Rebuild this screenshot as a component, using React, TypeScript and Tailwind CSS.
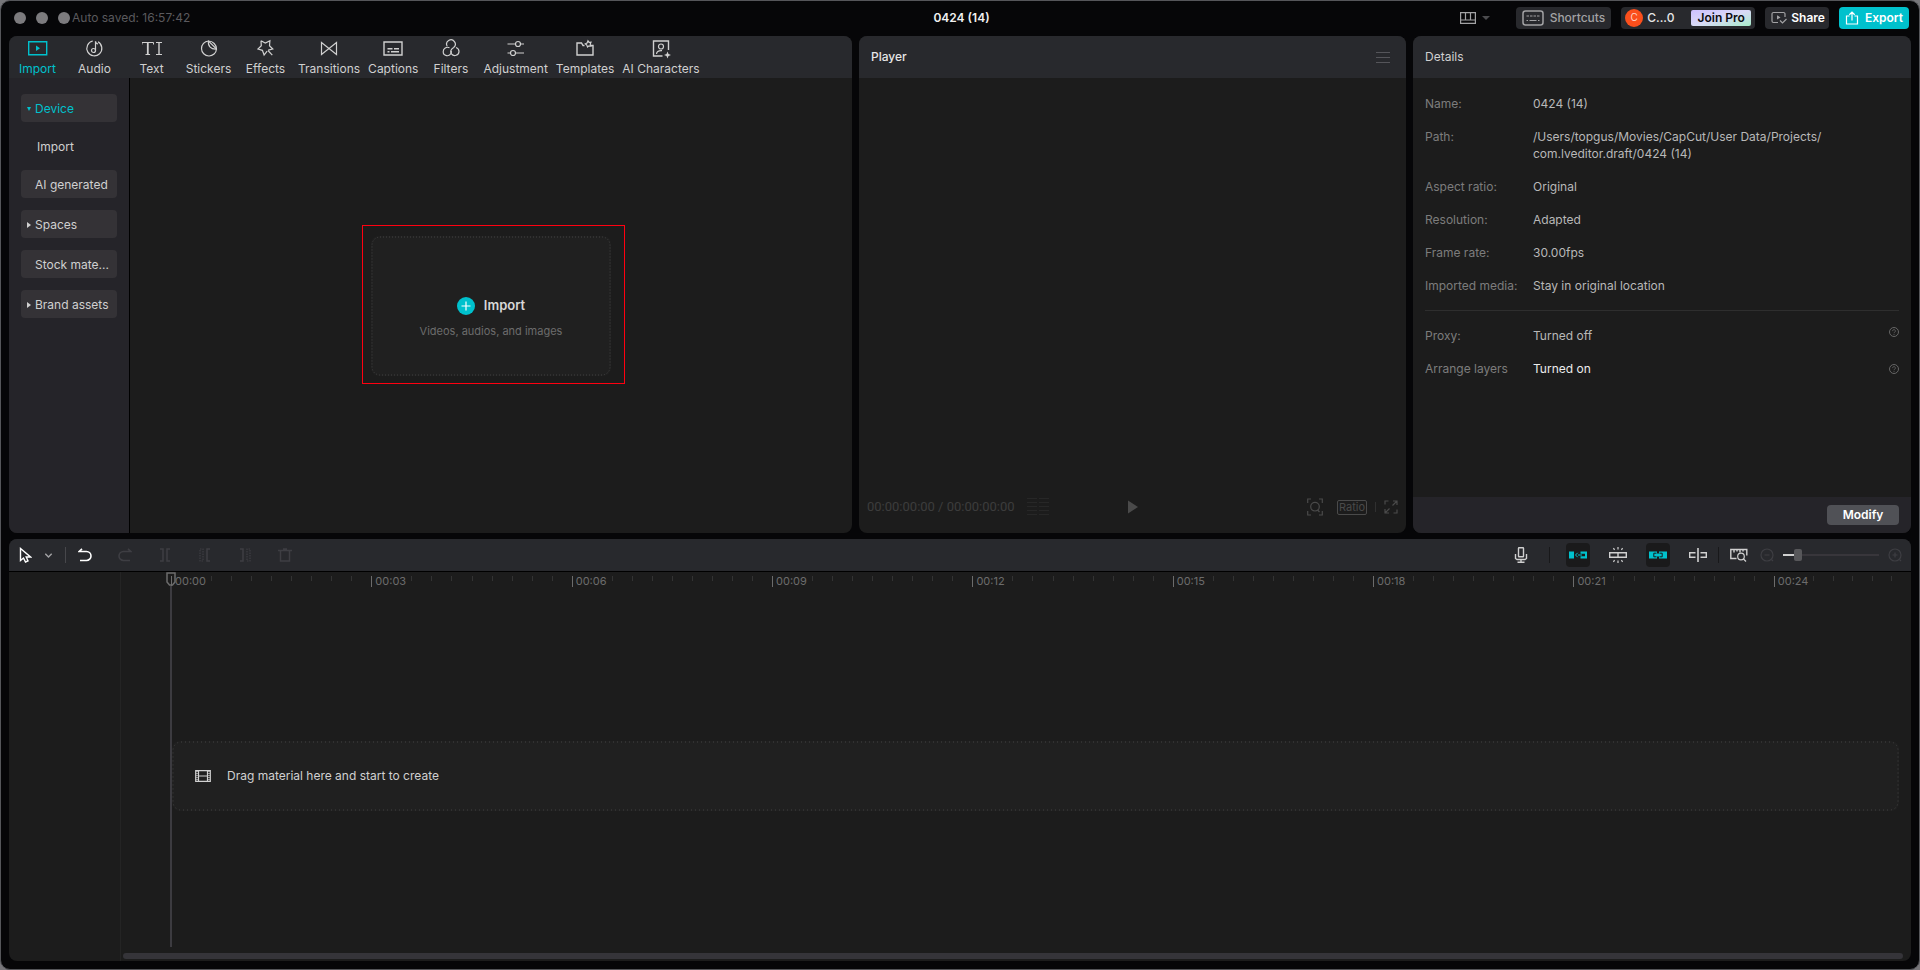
import React, { useState } from 'react';

const tabs = [
  'Import',
  'Audio',
  'Text',
  'Stickers',
  'Effects',
  'Transitions',
  'Captions',
  'Filters',
  'Adjustment',
  'Templates',
  'AI Characters',
];

const tabIcons: Record<string, React.ReactNode> = {
  Import: (
    <>
      <path d="M.7 2.700h18v13H.7z" strokeWidth="1.4" />
      <path d="M8 6.500v5.400l4-2.700z" fill="currentColor" stroke="none" />
    </>
  ),
  Audio: (
    <>
      <path d="M7.800 2A7.500 7.500 0 1 0 13 2.800" />
      <circle cx="8.500" cy="11.500" r="2" />
      <path d="M10.500 11.500V2.200c.2 1.800 1 2.600 2.600 2.800" />
    </>
  ),
  Text: (
    <>
      <path d="M0 5.500V3.500h11.500v2M3.500 15.500h4.600" strokeWidth="1" />
      <path d="M5.800 3.500v12" strokeWidth="1.800" />
      <path d="M14 3.500h6M14 15.500h6" strokeWidth="1" />
      <path d="M17 3.500v12" strokeWidth="1.400" />
    </>
  ),
  Stickers: (
    <>
      <path d="M9.500 2A7.500 7.500 0 1 0 17.500 10z" />
      <path d="M9.500 2c-.8 5 2.500 8.500 8 8C17.500 6 14 2 9.500 2z" />
    </>
  ),
  Effects: (
    <>
      <path d="M5 1.800l4.300 2.300 4.600-2.300-.4 4.900 3.300 3.300-4.600 1.200M5 1.800l.3 5L2 10l4.400 1.300L8.100 16l3-3.800" />
      <path d="M12 11.500l4.300 4.600" />
    </>
  ),
  Transitions: <path d="M2.500 3.500v12l15-12v12z" />,
  Captions: (
    <>
      <path d="M1 3h18v13H1z" strokeWidth="1.4" />
      <path d="M4.500 9.700h5M11 9.700h5M4.500 12.700h2M8 12.700h8" strokeWidth="1.6" />
    </>
  ),
  Filters: (
    <>
      <path d="M6.200 7.300a4.300 4.300 0 1 1 6.500 1.200c-3 1.600-3.600 4-2.200 6.300 2.400 3.300 7.500 1.400 7.500-2.300 0-2-1.200-3.400-3-4" />
      <path d="M8.500 8.700c-3-1.300-6.300.7-6.300 4 0 4.200 6 5.500 7.700 1.900.4-.8.500-1.700.3-2.600" />
    </>
  ),
  Adjustment: (
    <>
      <path d="M1.500 5h8M14.500 5H18M1.500 14h3M9.500 14H18" />
      <circle cx="12" cy="5" r="2.500" />
      <circle cx="7" cy="14" r="2.500" />
    </>
  ),
  Templates: (
    <>
      <path d="M9.500 6.500H8L6.500 4H2v12h16V6.500h-2" strokeWidth="1.4" />
      <path d="M13 1.800l1 1.500 2-.1-.8 1.900.7 2-1.900-.3-1.500 1.200-.7-2-1.500-1.200 1.800-.8z" />
    </>
  ),
  'AI Characters': (
    <>
      <path d="M17.500 11V2h-15v15h9" strokeWidth="1.4" />
      <circle cx="10" cy="7.500" r="2.500" />
      <path d="M5.500 15c.2-2.500 2-3.500 5.500-3.300" />
      <path d="M16.500 12.500l1 2.500 2.500 1-2.500 1-1 2.500-1-2.500-2.500-1 2.500-1z" fill="currentColor" stroke="none" />
    </>
  ),
};

const sidebar = [
  { label: 'AI generated', arrow: false },
  { label: 'Spaces', arrow: true },
  { label: 'Stock mate...', arrow: false },
  { label: 'Brand assets', arrow: true },
];

const details = [
  { label: 'Name:', value: '0424 (14)' },
  { label: 'Path:', value: '/Users/topgus/Movies/CapCut/User Data/Projects/\ncom.lveditor.draft/0424 (14)' },
  { label: 'Aspect ratio:', value: 'Original' },
  { label: 'Resolution:', value: 'Adapted' },
  { label: 'Frame rate:', value: '30.00fps' },
  { label: 'Imported media:', value: 'Stay in original location' },
];

const times = ['00:00', '00:03', '00:06', '00:09', '00:12', '00:15', '00:18', '00:21', '00:24'];

type IconProps = { w: number; h: number; className?: string; children: React.ReactNode };

function Icon({ w, h, className, children }: IconProps) {
  return (
    <svg
      width={w}
      height={h}
      viewBox={`0 0 ${w} ${h}`}
      fill="none"
      stroke="currentColor"
      strokeWidth="1.2"
      className={`shrink-0 ${className ?? ''}`}
      aria-hidden="true"
    >
      {children}
    </svg>
  );
}

// widely spaced dots round a drop area
function DottedEdge({ dash }: { dash: string }) {
  return (
    <svg className="pointer-events-none absolute inset-0 size-full overflow-visible p-px" aria-hidden="true">
      <rect width="100%" height="100%" rx="8" fill="none" stroke="#434343" strokeDasharray={dash} />
    </svg>
  );
}

function TitleBar() {
  return (
    <header className="grid h-[35px] shrink-0 grid-cols-[1fr_auto_1fr] items-center pr-2.5 pb-0.5 pl-[13px]">
      <div className="flex items-center">
        <div className="flex gap-[10px]">
          <span className="size-3 rounded-full bg-[#7c7b7e]" />
          <span className="size-3 rounded-full bg-[#7c7b7e]" />
          <span className="size-3 rounded-full bg-[#7c7b7e]" />
        </div>
        <span className="ml-0.5 text-[#5a595d]">Auto saved: 16:57:42</span>
      </div>
      <h1 className="font-semibold text-[#f0f0f0]">0424 (14)</h1>
      <div className="flex items-center justify-end gap-[10px]">
        <button type="button" aria-label="Layout" className="mr-4 flex items-center gap-1.5 text-[#a2a2a4]">
          <Icon w={16} h={12}>
            <path d="M.6.6h14.800v10.800H.6zM.6 8h14.800M5.500.6V8M10.500.6V8" />
          </Icon>
          <Icon w={8} h={4} className="text-[#4b4b4e]">
            <path d="M0 0h8L4 4z" fill="currentColor" stroke="none" />
          </Icon>
        </button>
        <button type="button" className="flex h-[22px] items-center gap-1.5 rounded bg-[#28292d] px-1.5 font-medium text-[#a2a2a4]">
          <Icon w={22} h={16}>
            <rect x="1" y="1" width="20" height="14" rx="2.5" strokeWidth="1.5" />
            <path d="M4.500 6h2.500M8 6h2.500M11.500 6H14M15 6h2.500M4.500 10.500H6M7.500 10.500h7M16 10.500h1.500" />
          </Icon>
          Shortcuts
        </button>
        <div className="flex h-[22px] items-center rounded bg-[#28292d] px-1">
          <span className="flex size-[18px] items-center justify-center rounded-full bg-[#fb4f1c] text-[10px] text-[#ffd5c8]">C</span>
          <span className="ml-1 w-11 font-medium text-[#e6e6e6]">C...0</span>
          <button
            type="button"
            className="h-4 w-[60px] rounded-xs bg-linear-to-br from-[#cdbfff] via-[#d9d9f6] to-[#a5ecc9] leading-4 font-semibold text-[#0b0b10]"
          >
            Join Pro
          </button>
        </div>
        <button type="button" className="flex h-[22px] items-center gap-1 rounded bg-[#28292d] pr-1 pl-1.5 font-semibold text-white">
          <Icon w={16} h={14} className="text-[#a2a2a4]">
            <path d="M14 6V3a1.500 1.500 0 0 0-1.500-1.500h-10A1.500 1.500 0 0 0 1 3v7a1.500 1.500 0 0 0 1.500 1.500H7" />
            <path d="M6 4.200v4.300l3.500-2.100z" fill="currentColor" stroke="none" />
            <path d="M9 9.500l2.500 2.500L15.500 8" />
          </Icon>
          Share
        </button>
        <button type="button" className="flex h-[22px] items-center gap-1.5 rounded bg-[#00c1cd] px-1.5 font-semibold text-white">
          <Icon w={14} h={14}>
            <path d="M4.500 5H1.500v8h11V5h-3M7 9.500V1.500M4.300 3.800L7 1.200l2.700 2.600" />
          </Icon>
          Export
        </button>
      </div>
    </header>
  );
}

function MediaPanel() {
  const [active, setActive] = useState('Import');

  return (
    <section className="flex min-w-0 flex-col overflow-hidden rounded-lg bg-[#1c1c1c]">
      <nav className="flex h-[42px] shrink-0 bg-[#28292d]">
        {tabs.map((tab) => (
          <button
            key={tab}
            type="button"
            onClick={() => setActive(tab)}
            className={`flex min-w-[57px] flex-col items-center gap-0.5 px-1 pt-[3px] ${
              active === tab ? 'text-[#00c1cd]' : 'text-[#d0d0d0]'
            }`}
          >
            <Icon w={20} h={20}>
              {tabIcons[tab]}
            </Icon>
            <span className="leading-4 whitespace-nowrap">{tab}</span>
          </button>
        ))}
      </nav>
      <div className="flex flex-1">
        <aside className="flex w-[121px] shrink-0 flex-col border-r border-black bg-[#252429] px-3 pt-4 text-[#d0d0d0]">
          <button type="button" className="flex h-7 items-center gap-1 rounded bg-[#343236] pt-0.5 pl-1.5 text-[#00c1cd]">
            <Icon w={4} h={4}>
              <path d="M0 0h4L2 4z" fill="currentColor" stroke="none" />
            </Icon>
            Device
          </button>
          <button type="button" className="h-12 pt-0.5 pl-4 text-left">
            Import
          </button>
          <div className="flex flex-col gap-3">
            {sidebar.map((item) => (
              <button
                key={item.label}
                type="button"
                className="flex h-7 items-center gap-1 rounded bg-[#343236] pt-0.5 pl-1.5 whitespace-nowrap"
              >
                <Icon w={4} h={6}>
                  {item.arrow && <path d="M0 0v6l4-3z" fill="currentColor" stroke="none" />}
                </Icon>
                {item.label}
              </button>
            ))}
          </div>
        </aside>
        <div className="flex flex-1 items-center justify-center">
          <div className="relative">
            <button
              type="button"
              className="relative flex h-[140px] w-60 flex-col items-center justify-center rounded-lg bg-[#202020] pt-6"
            >
              <DottedEdge dash="1 2" />
              <span className="flex items-center gap-[9px] text-[13px] font-semibold text-[#d8d8d8]">
                <span className="flex size-[18px] items-center justify-center rounded-full bg-[#00c1cd] text-white">
                  <Icon w={10} h={10}>
                    <path d="M5 .5v9M.5 5h9" />
                  </Icon>
                </span>
                Import
              </span>
              <span className="mt-[9px] text-[11px] text-[#6c6c6c]">Videos, audios, and images</span>
            </button>
            <span className="pointer-events-none absolute -top-[11px] -left-[9px] h-[159px] w-[263px] border border-[#ff0010]" />
          </div>
        </div>
      </div>
    </section>
  );
}

function PlayerPanel() {
  return (
    <section className="flex min-w-0 flex-col overflow-hidden rounded-lg bg-[#1c1c1c]">
      <div className="flex h-[42px] shrink-0 items-center justify-between bg-[#28292d] pr-4 pl-3">
        <h2 className="font-medium text-[#e6e6e6]">Player</h2>
        <button type="button" aria-label="Player menu" className="text-[#55555a]">
          <Icon w={14} h={11}>
            <path d="M0 .5h14M0 5.500h14M0 10.500h14" strokeWidth="1" />
          </Icon>
        </button>
      </div>
      <div className="flex-1" />
      <div className="grid h-[52px] grid-cols-[1fr_auto_1fr] items-center px-2 text-[#3c3c3c]">
        <div className="flex items-center gap-3">
          <span className="font-['Roboto','Liberation_Sans',sans-serif] text-[13px]">00:00:00:00 / 00:00:00:00</span>
          <Icon w={22} h={17} className="text-[#272727]">
            <path d="M0 .5h10M12 .5h10M0 4.500h10M12 4.500h10M0 8.500h10M12 8.500h10M0 12.500h10M12 12.500h10M0 16.500h10M12 16.500h10" strokeWidth="1" />
          </Icon>
        </div>
        <button type="button" aria-label="Play" className="text-[#4a4a4a]">
          <Icon w={10} h={14}>
            <path d="M0 .5v13L10 7z" fill="currentColor" stroke="none" />
          </Icon>
        </button>
        <div className="flex items-center justify-end text-[#4a4a4a]">
          <button type="button" aria-label="Zoom preview">
            <Icon w={16} h={18}>
              <path d="M.7 5V1H4M12 1h3.300v4M.7 13v4H4M12 17h3.300v-4" />
              <circle cx="8" cy="8.700" r="4.3" />
              <path d="M10.500 12l2 2" />
            </Icon>
          </button>
          <button type="button" className="ml-[14px] rounded-xs border border-[#4a4a4a] px-px text-[11px] leading-[13px]">
            Ratio
          </button>
          <span className="mx-2 h-2.5 w-px bg-[#303030]" />
          <button type="button" aria-label="Full screen">
            <Icon w={14} h={14}>
              <path d="M1 4.500V1h3.500M9 1h4v4M13 1L8.500 5.500M1 9v4h4M1 13l4.500-4.500M13 9.500V13H9.500" />
            </Icon>
          </button>
        </div>
      </div>
    </section>
  );
}

function HelpButton({ label }: { label: string }) {
  return (
    <button type="button" aria-label={label} className="text-[#666666]">
      <Icon w={10} h={10}>
        <circle cx="5" cy="5" r="4.5" strokeWidth="1" />
        <path d="M3.600 4.100a1.400 1.400 0 1 1 1.900 1.200c-.4.200-.5.400-.5.900M5 7v.9" strokeWidth=".8" />
      </Icon>
    </button>
  );
}

function DetailsPanel() {
  return (
    <section className="flex min-w-0 flex-col overflow-hidden rounded-lg bg-[#1c1c1c]">
      <h2 className="flex h-[42px] shrink-0 items-center bg-[#28292d] px-3 text-[#d0d0d0]">Details</h2>
      <div className="flex-1 px-3 pt-[17px] leading-[17px]">
        <dl className="flex flex-col gap-4 border-b border-[#2e2e2e] pb-4">
          {details.map((row) => (
            <div key={row.label} className="flex">
              <dt className="w-[108px] shrink-0 text-[#7c7c7c]">{row.label}</dt>
              <dd className="whitespace-pre-line text-[#b8b8b8]">{row.value}</dd>
            </div>
          ))}
        </dl>
        <dl className="flex flex-col gap-4 pt-4">
          <div className="flex">
            <dt className="w-[108px] shrink-0 text-[#7c7c7c]">Proxy:</dt>
            <dd className="flex flex-1 justify-between text-[#b8b8b8]">
              Turned off
              <span className="flex items-start">
                <HelpButton label="About proxy" />
              </span>
            </dd>
          </div>
          <div className="flex">
            <dt className="w-[108px] shrink-0 text-[#7c7c7c]">Arrange layers</dt>
            <dd className="flex flex-1 justify-between text-[#ececec]">
              Turned on
              <span className="flex items-center">
                <HelpButton label="About arrange layers" />
              </span>
            </dd>
          </div>
        </dl>
      </div>
      <div className="flex h-9 items-center justify-end bg-[#252429] px-3">
        <button type="button" className="h-5 w-[72px] rounded bg-[#505156] font-semibold text-white">
          Modify
        </button>
      </div>
    </section>
  );
}

function ToolButton({ label, className, children }: { label: string; className?: string; children: React.ReactNode }) {
  return (
    <button type="button" aria-label={label} className={`flex size-6 items-center justify-center rounded ${className ?? ''}`}>
      {children}
    </button>
  );
}

function Toolbar() {
  const [zoom, setZoom] = useState(11);

  return (
    <div className="flex h-8 shrink-0 items-center justify-between bg-[#28292d] px-1">
      <div className="flex items-center text-[#3e3e43]">
        <ToolButton label="Select" className="text-white">
          <Icon w={14} h={16}>
            <path d="M2.500 1.500v12l3-2.500 2 4 2.500-1.200-1.800-3.800h4.300z" strokeWidth="1.4" />
          </Icon>
        </ToolButton>
        <ToolButton label="Select options" className="text-[#a2a2a4]">
          <Icon w={8} h={5}>
            <path d="M.3.8L3.500 4 6.700.8" strokeWidth="1.4" />
          </Icon>
        </ToolButton>
        <span className="mx-1 h-4 w-px bg-[#47474b]" />
        <div className="ml-[3px] flex gap-4">
          <ToolButton label="Undo" className="text-white">
            <Icon w={14} h={14}>
              <path d="M4 .8L1.200 3.500H8.500a4.500 4.500 0 0 1 0 9H2" strokeWidth="1.6" />
            </Icon>
          </ToolButton>
          <ToolButton label="Redo">
            <Icon w={14} h={14}>
              <path d="M10 .8l2.800 2.700H5.500a4.500 4.500 0 0 0 0 9H12" strokeWidth="1.6" />
            </Icon>
          </ToolButton>
          <ToolButton label="Split">
            <Icon w={12} h={14}>
              <path d="M1 1h3v12H1M11 1H8v12h3" strokeWidth="1.5" />
            </Icon>
          </ToolButton>
          <ToolButton label="Delete left">
            <Icon w={12} h={14}>
              <path d="M1 1h3v12H1z" strokeDasharray="1.5 1" />
              <path d="M11 1H8v12h3" strokeWidth="1.5" />
            </Icon>
          </ToolButton>
          <ToolButton label="Delete right">
            <Icon w={12} h={14}>
              <path d="M1 1h3v12H1" strokeWidth="1.5" />
              <path d="M11 1H8v12h3z" strokeDasharray="1.5 1" />
            </Icon>
          </ToolButton>
          <ToolButton label="Delete">
            <Icon w={14} h={14}>
              <path d="M0 2.500h14M5 1h4M2.500 2.500V13h9V2.500" strokeWidth="1.5" />
            </Icon>
          </ToolButton>
        </div>
      </div>
      <div className="flex items-center text-[#d0d0d0]">
        <ToolButton label="Record">
          <Icon w={14} h={16}>
            <rect x="4.5" y=".8" width="5" height="9" rx=".5" strokeWidth="1.4" />
            <path d="M1.500 7v4.500l1.500 1h8l1.500-1V7M7 12.500V15M3.500 15.300h7" strokeWidth="1.4" />
          </Icon>
        </ToolButton>
        <span className="mx-4 h-4 w-px bg-[#18181a]" />
        <div className="flex gap-4">
          <ToolButton label="Main track magnet" className="bg-[#1a1a1b] text-[#00c1cd]">
            <Icon w={18} h={8}>
              <path d="M0 .5h5v7H0zM11.500.5H18v7h-6.500V5.300H16V2.700h-4.500z" fill="currentColor" stroke="none" />
              <path d="M8.700 1.800L6.500 4l2.200 2.200M9 4h4" strokeWidth="1" />
            </Icon>
          </ToolButton>
          <ToolButton label="Auto snapping">
            <Icon w={18} h={16}>
              <path d="M.7 5.700h16.600v4.600H.7zM9 5.700v4.600" strokeWidth="1.4" />
              <path d="M9 0v2.500M4.500 1l1 2M13.500 1l-1 2M9 13.500V16M4.500 15l1-2M13.500 15l-1-2" />
            </Icon>
          </ToolButton>
          <ToolButton label="Linkage" className="bg-[#1a1a1b] text-[#00c1cd]">
            <Icon w={18} h={8}>
              <path d="M0 .5h18v7H0z" fill="currentColor" stroke="none" />
              <path d="M7.500 2.200H4.800v3.600h2.700M10.500 2.200h2.700v3.600h-2.700" stroke="#1a1a1b" strokeWidth="1" />
              <path d="M9 0v2.600M9 5.400V8" stroke="#1a1a1b" strokeWidth="2" />
            </Icon>
          </ToolButton>
          <ToolButton label="Preview axis">
            <Icon w={18} h={14}>
              <path d="M6.500 4.700H.7v4.600h5.800M11.500 4.700h5.800v4.600h-5.800" strokeWidth="1.4" />
              <path d="M9 0v14" strokeWidth="1.6" />
            </Icon>
          </ToolButton>
        </div>
        <span className="mx-2 h-4 w-px bg-[#18181a]" />
        <ToolButton label="Fit timeline">
          <Icon w={18} h={14}>
            <path d="M6.500 10.500H.8V1.500h16v6M4 1.500v3M7 1.500v2M10 1.500v3M13 1.500v2" strokeWidth="1.4" />
            <circle cx="11" cy="8.500" r="3.3" />
            <path d="M13.500 11l2.500 2.500" />
          </Icon>
        </ToolButton>
        <div className="ml-1 flex items-center gap-1 text-[#3e3e43]">
          <ToolButton label="Zoom out">
            <Icon w={14} h={14}>
              <circle cx="7" cy="7" r="6" />
              <path d="M4.500 7h5M11.500 11.500l1.500 1.500" />
            </Icon>
          </ToolButton>
          <label className="relative flex h-6 w-24 items-center">
            <span className="h-0.5 bg-[#d0d0d0]" style={{ width: `${zoom}%` }} />
            <span className="h-3 w-2 rounded-xs bg-[#57575a]" />
            <span className="h-0.5 flex-1 bg-[#38363b]" />
            <input
              type="range"
              aria-label="Timeline zoom"
              value={zoom}
              max={90}
              onChange={(e) => setZoom(Number(e.target.value))}
              className="absolute inset-0 w-full opacity-0"
            />
          </label>
          <ToolButton label="Zoom in">
            <Icon w={14} h={14}>
              <circle cx="7" cy="7" r="6" />
              <path d="M4.500 7h5M7 4.500v5M11.500 11.500l1.500 1.500" />
            </Icon>
          </ToolButton>
        </div>
      </div>
    </div>
  );
}

function Ruler() {
  return (
    <div className="ml-[50px] grid grid-cols-[repeat(8,200fr)_137fr] pt-1 text-[11px] text-[#6c6c6c]">
      {times.map((time, i) => (
        <div key={time} className="grid h-[11px] min-w-0 grid-flow-col auto-cols-fr">
          <span className="col-span-2 border-l border-[#6c6c6c] pl-[3px] leading-[11px] whitespace-nowrap">{time}</span>
          {Array.from({ length: i === 8 ? 5 : 8 }, (_, n) => (
            <span key={n} className="h-[5px] border-l border-[#333333]" />
          ))}
        </div>
      ))}
    </div>
  );
}

function Timeline() {
  return (
    <section className="flex min-h-[422px] flex-[422] flex-col overflow-hidden rounded-lg bg-[#1c1c1c]">
      <Toolbar />
      <div className="flex flex-1 border-t border-black">
        <div className="w-28 shrink-0 border-r border-[#242424]" />
        <div className="relative flex min-w-0 flex-1 flex-col">
          <Ruler />
          <div className="flex flex-1 flex-col justify-center pt-3 pr-3 pl-[51px]">
            <div className="relative flex h-[70px] items-center gap-4 rounded-lg bg-[#202020] pl-[23px] text-[#d0d0d0]">
              <DottedEdge dash="1 3" />
              <Icon w={16} h={12}>
                <path d="M.7.7h14.600v10.600H.7zM3.500.7v10.600M12.500.7v10.600M3.500 6h9" />
                <path d="M2 1v10M14 1v10" strokeDasharray="1 1" />
              </Icon>
              Drag material here and start to create
            </div>
          </div>
          <div className="mr-2 mb-0.5 ml-0.5 h-1.5 shrink-0 rounded-full bg-[#353439]" />
          {/* playhead */}
          <div className="absolute top-0 bottom-[14px] left-[45px] flex w-[10px] flex-col items-center text-[#6c6c6c]">
            <Icon w={10} h={14}>
              <path d="M1 1h8v9l-2.500 3h-3L1 10z" strokeWidth="1.5" />
            </Icon>
            <span className="w-0.5 flex-1 bg-[#3c3b40]" />
          </div>
        </div>
      </div>
    </section>
  );
}

function App() {
  return (
    <div className="flex min-h-screen bg-[#77767a] font-['Inter','Liberation_Sans',sans-serif] text-xs">
      <div className="flex flex-1 flex-col rounded-[10px] border border-[#55565a] bg-[#060608]">
        <TitleBar />
        <main className="flex flex-1 flex-col gap-1.5 px-2 pb-2">
          <div className="grid min-h-[497px] flex-[497] grid-cols-[843fr_547fr_498fr] gap-[7px]">
            <MediaPanel />
            <PlayerPanel />
            <DetailsPanel />
          </div>
          <Timeline />
        </main>
      </div>
    </div>
  );
}

export default App;
